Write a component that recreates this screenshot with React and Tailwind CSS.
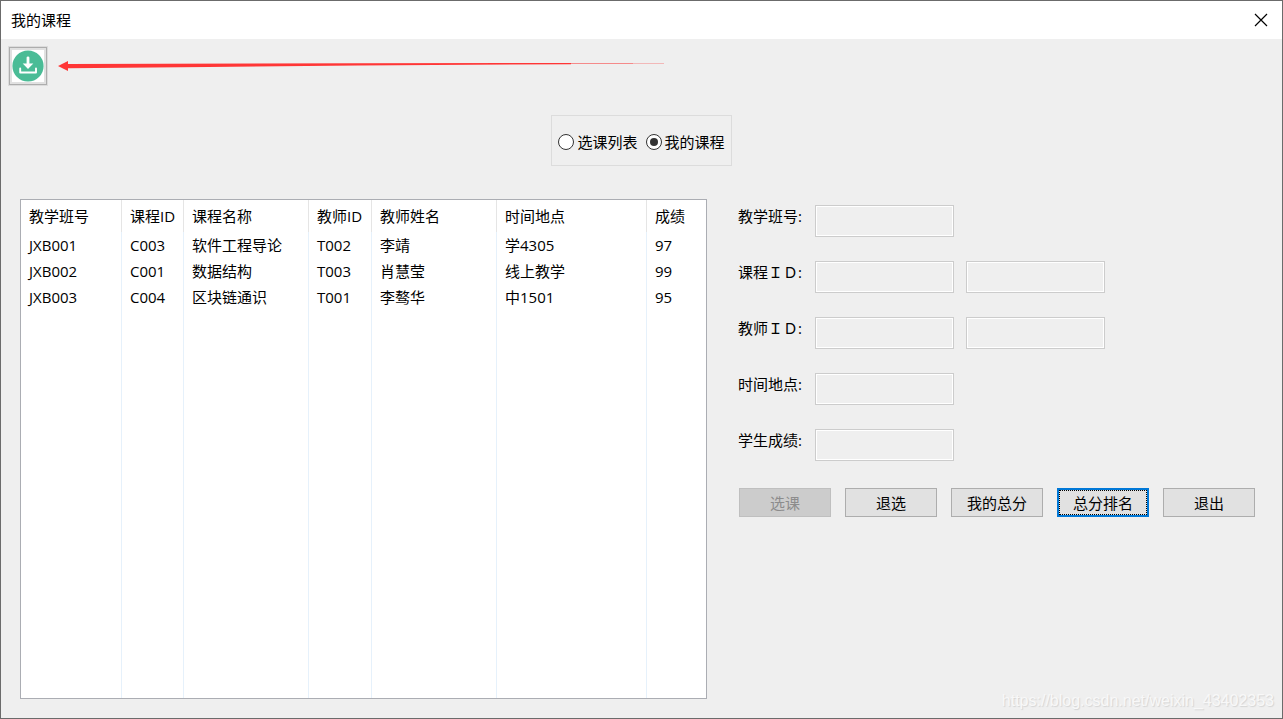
import { useState } from "react";

const columns = ["教学班号", "课程ID", "课程名称", "教师ID", "教师姓名", "时间地点", "成绩"];
const columnWidths = ["w-[101px]", "w-[62px]", "w-[125px]", "w-[63px]", "w-[125px]", "w-[150px]", ""];

const courses = [
  ["JXB001", "C003", "软件工程导论", "T002", "李靖", "学4305", "97"],
  ["JXB002", "C001", "数据结构", "T003", "肖慧莹", "线上教学", "99"],
  ["JXB003", "C004", "区块链通识", "T001", "李骜华", "中1501", "95"],
];

const fields = [
  { id: "class-no", label: "教学班号:" },
  { id: "course-id", label: "课程ＩＤ:", extra: "课程名称" },
  { id: "teacher-id", label: "教师ＩＤ:", extra: "教师姓名" },
  { id: "time-place", label: "时间地点:" },
  { id: "score", label: "学生成绩:" },
];

function TitleBar() {
  return (
    <header className="flex h-[38px] items-center justify-between bg-white pl-[10px] pr-[13px]">
      <h1>我的课程</h1>
      <button type="button" aria-label="关闭" className="grid size-4 place-items-center">
        <svg width="14" height="14" viewBox="0 0 14 14" fill="none" stroke="#000" strokeWidth="1.2">
          <path d="M1 1l12 12M13 1L1 13" />
        </svg>
      </button>
    </header>
  );
}

function Toolbar() {
  return (
    <div className="flex items-center gap-[11px] pl-2 pt-2">
      <button
        type="button"
        aria-label="下载"
        className="grid size-[38px] place-items-center border border-[#adadad] bg-[#e1e1e1] shadow-[0_0_0_1px_#dcdcdc]"
      >
        <svg width="32" height="32" viewBox="0 0 32 32">
          <rect width="32" height="32" fill="#fff" />
          <circle cx="16" cy="16" r="15.6" fill="#4abc96" />
          <path d="M14.6 7.6q0-1.2 1.4-1.2t1.4 1.2v6h3.9L16 19l-5.3-5.4h3.9z" fill="#fff" />
          <path
            d="M8.2 18.4v4.1h15.8v-4.1"
            fill="none"
            stroke="#fff"
            strokeWidth="1.9"
            strokeLinecap="round"
            strokeLinejoin="round"
          />
        </svg>
      </button>
      <svg width="606" height="10" viewBox="0 0 606 10" aria-hidden="true">
        <path d="M0 5L10 0v3L300 2.2 513 2v1.2L300 4.6 150 6 10 7.2V10z" fill="#ff3636" />
        <path d="M513 2h62v1h-62z" fill="#f58a8a" />
        <path d="M575 2h31v1h-31z" fill="#f2b8b8" />
      </svg>
    </div>
  );
}

function ModeOption({ label, value, mode, onChange }) {
  return (
    <label className="flex items-center gap-[3px]">
      <input
        type="radio"
        name="mode"
        checked={mode === value}
        onChange={() => onChange(value)}
        className="grid size-4 appearance-none place-content-center rounded-full border border-[#333] bg-white before:size-2 before:rounded-full checked:before:bg-[#333]"
      />
      {label}
    </label>
  );
}

function CourseTable() {
  return (
    <div className="min-w-0 flex-1 border border-[#abadb3] bg-white">
      <table className="h-full w-full table-fixed border-separate border-spacing-0 text-left">
        <thead>
          <tr>
            {columns.map((name, i) => (
              <th
                key={name}
                className={`${columnWidths[i]} h-8 whitespace-nowrap border-r border-[#e5e5e5] p-0 pl-2 font-normal last:border-r-0`}
              >
                {name}
              </th>
            ))}
          </tr>
        </thead>
        <tbody>
          {courses.map((row) => (
            <tr key={row[0]}>
              {row.map((cell, i) => (
                <td
                  key={columns[i]}
                  className="h-[26px] whitespace-nowrap border-r border-[#e6f1fb] p-0 pl-2 last:border-r-0"
                >
                  {cell}
                </td>
              ))}
            </tr>
          ))}
          <tr aria-hidden="true">
            {columns.map((name) => (
              <td key={name} className="border-r border-[#e6f1fb] p-0 last:border-r-0" />
            ))}
          </tr>
        </tbody>
      </table>
    </div>
  );
}

const fieldClass =
  "h-8 w-[139px] border border-[#cccccc] bg-[#efefef] px-1 shadow-[inset_0_0_0_1px_#fff] outline-none";
const buttonClass = "h-[29px] w-[92px] border";
const normalButton = "border-[#adadad] bg-[#e1e1e1]";

function DetailForm() {
  return (
    <form className="pt-[6px]" onSubmit={(e) => e.preventDefault()}>
      <div className="flex flex-col gap-6">
        {fields.map((f) => (
          <div key={f.id} className="flex items-start">
            <label htmlFor={f.id} className="w-[77px] leading-[22px]">
              {f.label}
            </label>
            <div className="flex gap-3">
              <input id={f.id} type="text" readOnly className={fieldClass} />
              {f.extra && <input type="text" readOnly aria-label={f.extra} className={fieldClass} />}
            </div>
          </div>
        ))}
      </div>
      <div className="mt-[27px] flex gap-[14px] pl-px">
        <button type="button" disabled className={`${buttonClass} border-[#bfbfbf] bg-[#cccccc] text-[#8c8c8c]`}>
          选课
        </button>
        <button type="button" className={`${buttonClass} ${normalButton}`}>
          退选
        </button>
        <button type="button" className={`${buttonClass} ${normalButton}`}>
          我的总分
        </button>
        <button type="button" className="h-[29px] w-[92px] border-2 border-[#0078d7] bg-[#e1e1e1]">
          <span className="flex h-full items-center justify-center border border-dotted border-black">总分排名</span>
        </button>
        <button type="button" className={`${buttonClass} ${normalButton}`}>
          退出
        </button>
      </div>
    </form>
  );
}

export default function App() {
  const [mode, setMode] = useState("mine");
  return (
    <div className="relative flex min-h-screen flex-col border border-[#6b6b6b] bg-[#efefef] font-['Open_Sans','Noto_Sans_CJK_SC',sans-serif] text-[15px] leading-5 text-black">
      <TitleBar />
      <Toolbar />
      <div
        role="radiogroup"
        aria-label="课程范围"
        className="mx-auto mt-[30px] flex h-[51px] items-center gap-2 border border-[#dcdcdc] px-[6px] pt-[2px]"
      >
        <ModeOption label="选课列表" value="list" mode={mode} onChange={setMode} />
        <ModeOption label="我的课程" value="mine" mode={mode} onChange={setMode} />
      </div>
      <main className="mt-[33px] flex flex-1 gap-[31px] pb-[19px] pl-[19px] pr-[27px]">
        <CourseTable />
        <DetailForm />
      </main>
      <p className="absolute bottom-[7px] right-2 font-['Liberation_Sans',sans-serif] text-[16px] text-[#f8f8f8] [text-shadow:1px_1px_1px_#d4d4d4]">
        https://blog.csdn.net/weixin_43402353
      </p>
    </div>
  );
}
